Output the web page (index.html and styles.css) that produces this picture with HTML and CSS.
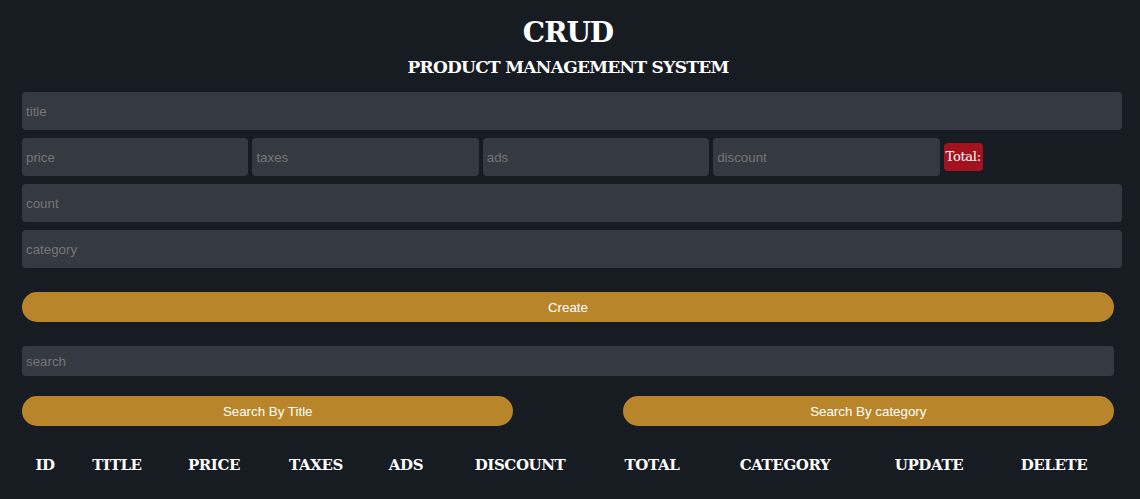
FILE: index.html
```html
<!DOCTYPE html>
<html lang="en">
<head>
<meta charset="UTF-8">
<title>CRUD</title>
<link rel="stylesheet" href="styles.css">
</head>
<body>
<div class="crud">
  <header class="head">
    <h1 class="head-title">CRUD</h1>
    <h2 class="head-sub">PRODUCT MANAGEMENT SYSTEM</h2>
  </header>
  <div class="inputs">
    <input class="field field-wide" type="text" placeholder="title">
    <div class="price-row">
      <input class="field field-price" type="number" placeholder="price">
      <input class="field field-price" type="number" placeholder="taxes">
      <input class="field field-price" type="number" placeholder="ads">
      <input class="field field-price" type="number" placeholder="discount">
      <small class="total">Total:</small>
    </div>
    <input class="field field-wide" type="number" placeholder="count">
    <input class="field field-wide" type="text" placeholder="category">
  </div>
  <button class="btn btn-create">Create</button>
  <input class="search" type="text" placeholder="search">
  <div class="search-btns">
    <button class="btn btn-half">Search By Title</button>
    <button class="btn btn-half">Search By category</button>
  </div>
  <table class="products">
    <colgroup>
      <col class="c-id"><col class="c-title"><col class="c-price"><col class="c-taxes"><col class="c-ads"><col class="c-discount"><col class="c-total"><col class="c-category"><col class="c-update"><col class="c-delete">
    </colgroup>
    <thead>
      <tr>
        <th>ID</th><th>TITLE</th><th>PRICE</th><th>TAXES</th><th>ADS</th><th>DISCOUNT</th><th>TOTAL</th><th>CATEGORY</th><th>UPDATE</th><th>DELETE</th>
      </tr>
    </thead>
    <tbody></tbody>
  </table>
</div>
</body>
</html>
```
FILE: styles.css
```css
* { box-sizing: border-box; }
html, body { margin: 0; padding: 0; }
body {
  background: #171b22;
  color: #ffffff;
  font-family: "DejaVu Serif", "Liberation Serif", serif;
  height: 499px;
  overflow: hidden;
}
.crud {
  display: flex;
  flex-direction: column;
  align-items: flex-start;
  padding: 15px 26px 0 22px;
}
.head { width: 100%; text-align: center; }
.head-title {
  margin: 0;
  font-size: 28px;
  line-height: 36px;
  font-weight: bold;
  letter-spacing: -1px;
}
.head-sub {
  margin: 5px 0 0;
  font-size: 17px;
  line-height: 22px;
  font-weight: bold;
  letter-spacing: -0.7px;
}
.inputs {
  width: 100%;
  margin-top: 14px;
  display: flex;
  flex-direction: column;
  align-items: flex-start;
  gap: 8px;
}
.field {
  height: 38px;
  padding: 4px;
  border: none;
  outline: none;
  border-radius: 4px;
  background: #353941;
  color: #ffffff;
  font-family: "Liberation Sans", Arial, sans-serif;
  font-size: 13.33px;
}
.field::placeholder, .search::placeholder { color: #757575; }
.field-wide { width: calc(100% + 8px); }
.price-row {
  width: 100%;
  display: flex;
  align-items: center;
  gap: 4px;
}
.field-price { flex: none; width: calc(20% + 8px); }
.total {
  background: #a3131f;
  color: #ffffff;
  border-radius: 4px;
  font-size: 13px;
  line-height: 22px;
  padding: 3px 2px;
  letter-spacing: -0.3px;
  font-family: "DejaVu Serif", serif;
}
.btn {
  height: 30px;
  border: none;
  border-radius: 20px;
  background: #b9852a;
  color: #ffffff;
  font-family: "Liberation Sans", Arial, sans-serif;
  font-size: 13.33px;
  cursor: pointer;
}
.btn-create { width: 100%; margin-top: 24px; }
.search {
  width: 100%;
  height: 30px;
  margin-top: 24px;
  padding: 4px;
  border: none;
  border-radius: 4px;
  background: #353941;
  color: #ffffff;
  font-family: "Liberation Sans", Arial, sans-serif;
  font-size: 13.33px;
}
.search-btns {
  width: 100%;
  margin-top: 20px;
  display: flex;
  justify-content: space-between;
}
.btn-half { width: 45%; }
.products {
  width: 100%;
  margin-top: 19px;
  border-collapse: collapse;
  table-layout: fixed;
}
.products th {
  padding: 10px 0;
  font-size: 15px;
  line-height: 20px;
  font-weight: bold;
  text-align: center;
  white-space: nowrap;
  letter-spacing: -0.4px;
}
.c-id { width: 46px; }
.c-title { width: 98px; }
.c-price { width: 96px; }
.c-taxes { width: 108px; }
.c-ads { width: 72px; }
.c-discount { width: 156px; }
.c-total { width: 108px; }
.c-category { width: 158px; }
.c-update { width: 130px; }
.c-delete { width: 120px; }
```
